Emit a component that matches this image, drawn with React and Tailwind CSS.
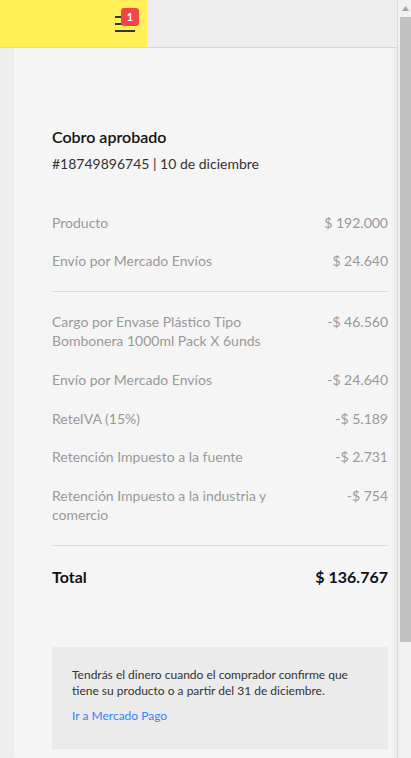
const rowsTop = [
  { label: "Producto", value: "$ 192.000" },
  { label: "Envío por Mercado Envíos", value: "$ 24.640" },
];

const rowsCharges = [
  { label: "Cargo por Envase Plástico Tipo Bombonera 1000ml Pack X 6unds", value: "-$ 46.560" },
  { label: "Envío por Mercado Envíos", value: "-$ 24.640" },
  { label: "ReteIVA (15%)", value: "-$ 5.189" },
  { label: "Retención Impuesto a la fuente", value: "-$ 2.731" },
  { label: "Retención Impuesto a la industria y comercio", value: "-$ 754" },
];

const Row = ({ label, value }) => (
  <div className="flex justify-between items-start text-[14px] leading-[19px] text-[#999999]">
    <span className="w-[240px]">{label}</span>
    <span className="whitespace-nowrap">{value}</span>
  </div>
);

const Header = () => (
  <div className="h-[48px] shrink-0 border-b border-[#d6d6d6] flex">
    <div className="w-[147px] h-full bg-[#fff059] relative">
      <div className="absolute left-[115px] top-[16px] w-[20px] flex flex-col gap-[5px]">
        <span className="block h-[2px] bg-[#333333]" />
        <span className="block h-[2px] bg-[#333333]" />
        <span className="block h-[2px] bg-[#333333]" />
      </div>
      <span className="absolute left-[121px] top-[8px] w-[18px] h-[18px] rounded-[3px] bg-[#f0464a] text-white text-[11px] font-bold leading-[18px] text-center">
        1
      </span>
    </div>
  </div>
);

const Scrollbar = () => (
  <div className="w-[14px] h-full shrink-0 border-l border-[#dadada] bg-[#f1f1f1] flex flex-col">
    <div className="h-[17px] shrink-0 flex items-center justify-center pl-[1px]">
      <svg width="7" height="5" viewBox="0 0 7 5">
        <polygon points="3.5,0 7,5 0,5" fill="#a3a3a3" />
      </svg>
    </div>
    <div className="h-[625px] ml-[2px] bg-[#c1c1c1]" />
  </div>
);

export default function App() {
  return (
    <div
      className="h-[758px] overflow-hidden flex bg-[#ededed]"
      style={{ fontFamily: "Lato, 'Open Sans', sans-serif" }}
    >
      <div className="flex-1 flex flex-col min-w-0">
        <Header />
        <div className="flex-1 pl-[14px] flex min-h-0">
          <div className="flex-1 bg-[#f5f5f5] pt-[79px] pl-[38px] pr-[9px] shadow-[inset_-5px_0_6px_-4px_rgba(0,0,0,0.08)]">
            <h1 className="text-[16px] leading-[20px] font-semibold text-[#111111]">Cobro aprobado</h1>
            <p className="mt-[8px] text-[14px] leading-[18px] text-[#333333]">
              #18749896745 | 10 de diciembre
            </p>

            <div className="mt-[40px] pb-[21px] flex flex-col gap-[19px] border-b border-[#dddddd]">
              {rowsTop.map((r, i) => (
                <Row key={i} {...r} />
              ))}
            </div>

            <div className="pt-[20px] pb-[21px] flex flex-col gap-[19.75px] border-b border-[#dddddd]">
              {rowsCharges.map((r, i) => (
                <Row key={i} {...r} />
              ))}
            </div>

            <div className="pt-[21px] flex justify-between text-[16px] leading-[20px] font-bold text-[#111111]">
              <span>Total</span>
              <span>$ 136.767</span>
            </div>

            <div className="mt-[60px] bg-[#ebebeb] pt-[20px] pb-[25px] px-[20px]">
              <p className="text-[12px] leading-[16px] text-[#333333]">
                Tendrás el dinero cuando el comprador confirme que tiene su producto o a partir del 31 de diciembre.
              </p>
              <a className="block mt-[9px] text-[12px] leading-[16px] text-[#3483fa]">Ir a Mercado Pago</a>
            </div>
          </div>
        </div>
      </div>
      <Scrollbar />
    </div>
  );
}
